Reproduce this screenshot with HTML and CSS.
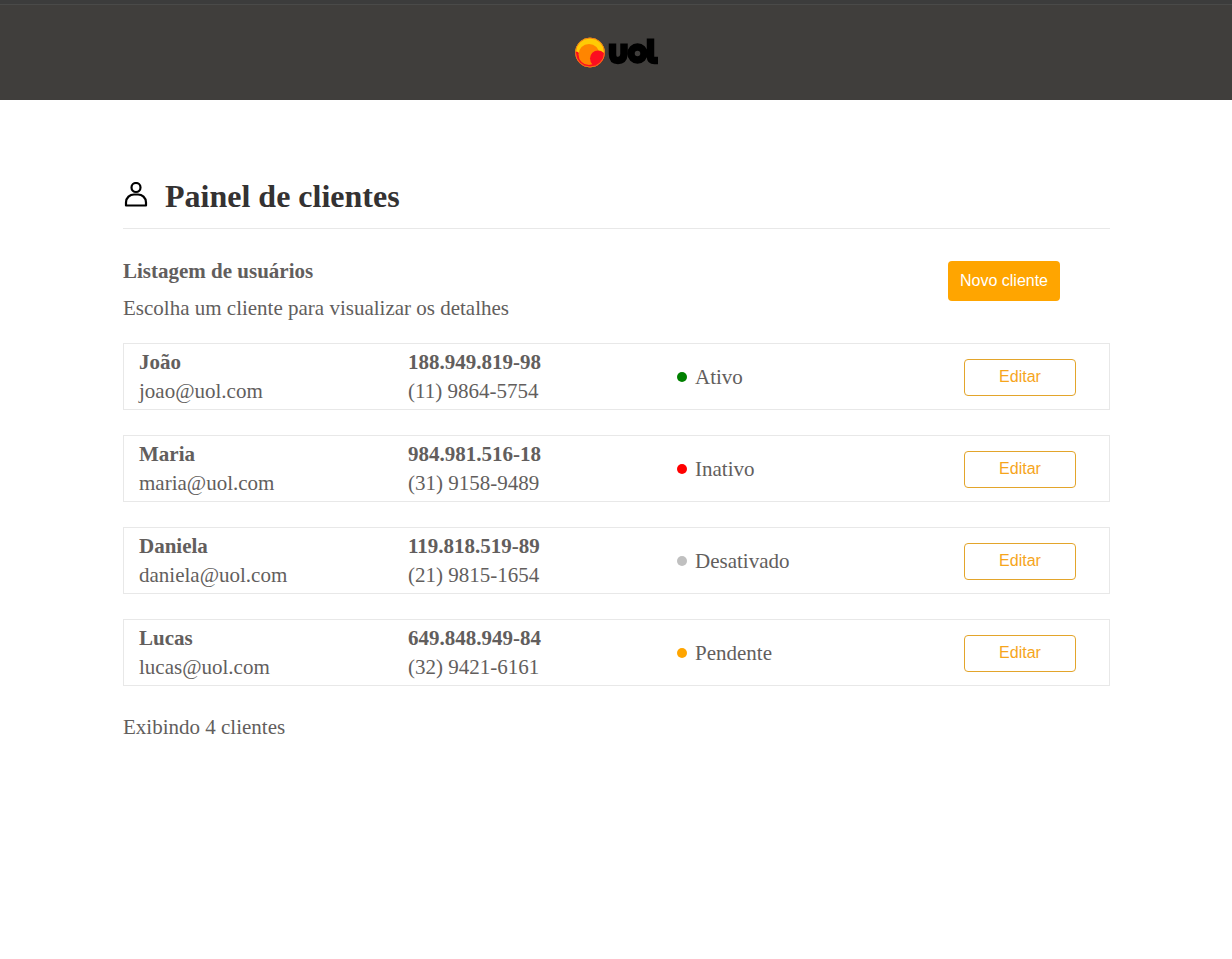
FILE: index.html
```html
<!DOCTYPE html>
<html lang="pt-BR">
<head>
<meta charset="utf-8">
<title>Painel de clientes</title>
<link rel="stylesheet" href="styles.css">
</head>
<body>
<header class="topbar">
  <svg class="logo" viewBox="0 0 84 32" role="img" aria-label="uol">
    <defs><clipPath id="ball"><circle cx="16" cy="16.500" r="14.800"/></clipPath></defs>
    <g clip-path="url(#ball)">
      <rect width="32" height="32" fill="#ffcb05"/>
      <path d="M0 15L4 16L10 24L24 24L32 14V32H0Z" fill="#fb0d1f"/>
      <circle cx="15" cy="18.500" r="10.500" fill="#ff8500"/>
      <circle cx="24" cy="22.500" r="8" fill="#fb0d1f"/>
    </g>
    <circle cx="16" cy="16.500" r="14.500" fill="none" stroke="#ed7918"/>
    <path d="M38.500 7.500v10.500q0 6.500 5.500 6.500t6-6.500V7.500" fill="none" stroke="#000" stroke-width="7.500"/>
    <circle cx="63.500" cy="17.500" r="6.500" fill="none" stroke="#000" stroke-width="7.500"/>
    <path d="M76.500 2.500v18q0 4 4 4h3.500" fill="none" stroke="#000" stroke-width="7.500"/>
  </svg>
</header>
<main class="page">
  <div class="page-title">
    <svg class="user-icon" viewBox="0 0 26 28" fill="none" stroke="#000" stroke-width="2.200" aria-hidden="true">
      <circle cx="13" cy="5.500" r="4.500"/>
      <path d="M3 23.500v-3c0-5 4-8 8-8h4c4 0 8 3 8 8v3z" stroke-linejoin="round"/>
    </svg>
    <h1 class="heading">Painel de clientes</h1>
  </div>
  <section class="intro">
    <div>
      <h2 class="subtitle">Listagem de usuários</h2>
      <p class="hint">Escolha um cliente para visualizar os detalhes</p>
    </div>
    <button class="button button-new" type="button">Novo cliente</button>
  </section>
  <ul class="clients">
    <li class="client">
      <div><strong class="line">João</strong><span class="line">joao@uol.com</span></div>
      <div><strong class="line">188.949.819-98</strong><span class="line">(11) 9864-5754</span></div>
      <div class="status"><span class="dot active"></span>Ativo</div>
      <button class="button button-edit" type="button">Editar</button>
    </li>
    <li class="client">
      <div><strong class="line">Maria</strong><span class="line">maria@uol.com</span></div>
      <div><strong class="line">984.981.516-18</strong><span class="line">(31) 9158-9489</span></div>
      <div class="status"><span class="dot inactive"></span>Inativo</div>
      <button class="button button-edit" type="button">Editar</button>
    </li>
    <li class="client">
      <div><strong class="line">Daniela</strong><span class="line">daniela@uol.com</span></div>
      <div><strong class="line">119.818.519-89</strong><span class="line">(21) 9815-1654</span></div>
      <div class="status"><span class="dot disabled"></span>Desativado</div>
      <button class="button button-edit" type="button">Editar</button>
    </li>
    <li class="client">
      <div><strong class="line">Lucas</strong><span class="line">lucas@uol.com</span></div>
      <div><strong class="line">649.848.949-84</strong><span class="line">(32) 9421-6161</span></div>
      <div class="status"><span class="dot pending"></span>Pendente</div>
      <button class="button button-edit" type="button">Editar</button>
    </li>
  </ul>
  <p class="total">Exibindo 4 clientes</p>
</main>
</body>
</html>
```
FILE: styles.css
```css
* { box-sizing: border-box; }
body {
  margin: 0;
  background: #fff;
  color: #625e5d;
  font-family: "Liberation Serif", "Times New Roman", serif;
  font-size: 21px;
  line-height: 29px;
}
h1, h2, p, ul { margin: 0; padding: 0; }
.topbar {
  display: flex;
  justify-content: center;
  padding: 32px 0;
  border-top: 4px solid #3c3c3c;
  background: #403e3c;
  box-shadow: inset 0 1px #4a4a49;
}
.logo { width: 84px; height: 32px; }
.page { margin: 76px 122px 0 123px; }
.page-title {
  display: flex;
  align-items: center;
  gap: 16px;
  padding-bottom: 12px;
  border-bottom: 1px solid #e8e8e8;
}
.user-icon { width: 26px; height: 28px; }
.heading { color: #343232; font-size: 32px; line-height: 40px; }
.intro {
  display: flex;
  justify-content: space-between;
  align-items: flex-start;
  padding: 28px 50px 20px 0;
}
.subtitle { margin-bottom: 8px; font-size: 21px; }
.button {
  width: 112px;
  border-radius: 4px;
  font: 16px/20px "Liberation Sans", Arial, sans-serif;
}
.button-new {
  height: 40px;
  margin-top: 4px;
  padding: 0;
  border: 0;
  background: #ffa500;
  color: #fff;
}
.button-edit {
  height: 37px;
  justify-self: center;
  border: 1px solid #e3a52b;
  background: #fff;
  color: #f6a51c;
}
.clients { display: grid; gap: 25px; list-style: none; }
.client {
  display: grid;
  grid-template-columns: repeat(3, 1fr) 148px;
  align-items: center;
  padding: 4px 15px 3px;
  border: 1px solid #e8e8e8;
}
.line { display: block; }
.status { display: flex; align-items: center; gap: 8px; }
.dot { width: 10px; height: 10px; border-radius: 50%; }
.active { background: #008000; }
.inactive { background: #f00; }
.disabled { background: #c0c0c0; }
.pending { background: #ffa500; }
.total { margin-top: 27px; }
```
